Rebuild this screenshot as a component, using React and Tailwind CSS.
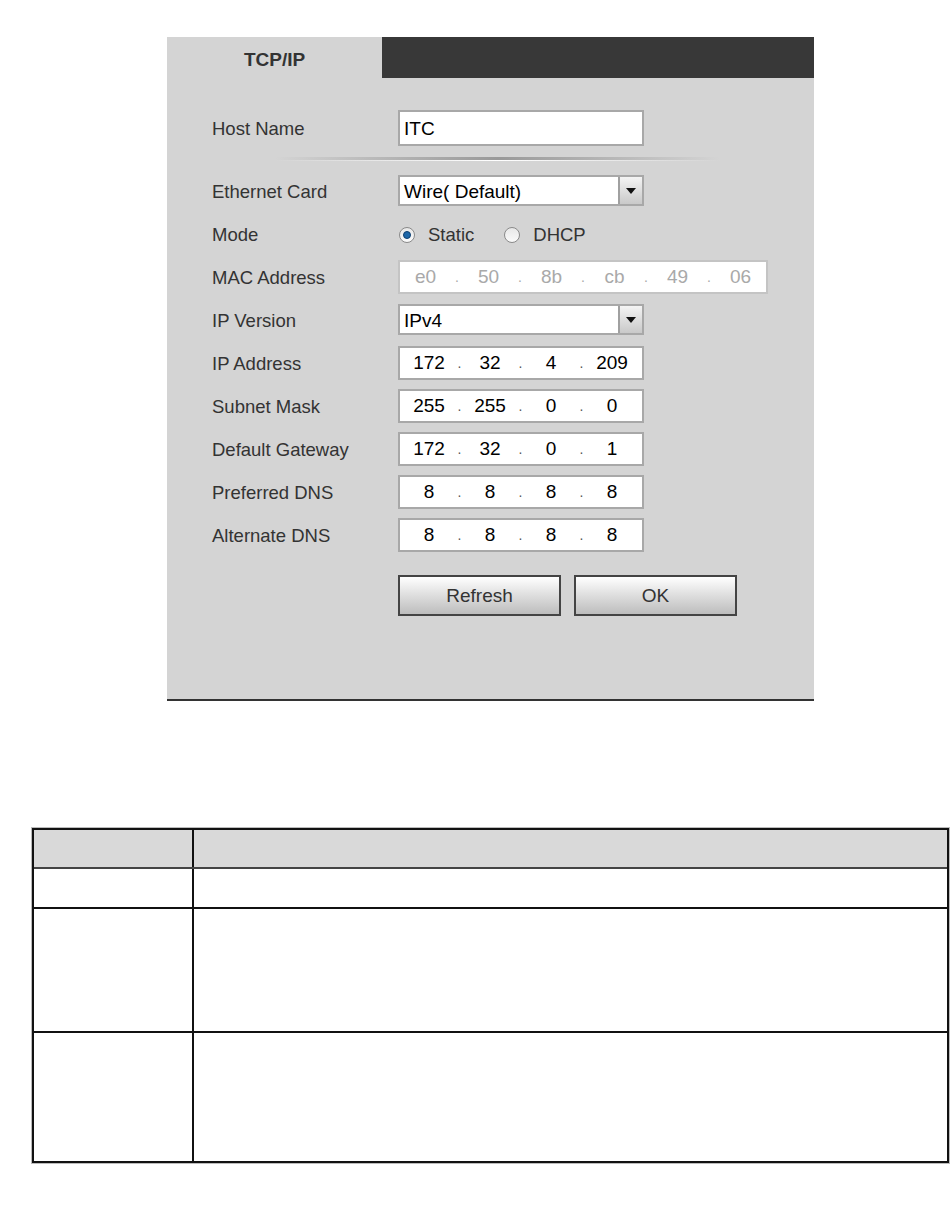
import React from "react";

const font = { fontFamily: '"Liberation Sans", Arial, sans-serif' };

const Dot = ({ gray, w = "w-[9px]" }) => (
  <span className={`${w} text-center text-[14px] ${gray ? "text-[#aaa]" : "text-[#555]"} self-end pb-[4px]`}>.</span>
);

const IpBox = ({ parts }) => (
  <div className="w-[246px] h-[34px] border-2 border-[#a8a8a8] bg-white flex items-center pl-[3px] pt-[2px] text-[19px] text-black">
    {parts.map((p, i) => (
      <React.Fragment key={i}>
        {i > 0 && <Dot />}
        <span className="w-[52px] text-center">{p}</span>
      </React.Fragment>
    ))}
  </div>
);

const MacBox = ({ parts }) => (
  <div className="w-[370px] h-[34px] border-2 border-[#c4c4c4] bg-white flex items-center pt-[2px] text-[19px] text-[#a9a9a9]">
    {parts.map((p, i) => (
      <React.Fragment key={i}>
        {i > 0 && <Dot gray w="w-[12px]" />}
        <span className="flex-1 text-center">{p}</span>
      </React.Fragment>
    ))}
  </div>
);

const Select = ({ value }) => (
  <div className="w-[246px] h-[31px] border-2 border-[#a8a8a8] bg-white flex items-stretch">
    <span className="flex-1 pl-[4px] text-[19px] text-black leading-[29px]">{value}</span>
    <span className="w-[24px] border-l-2 border-[#a0a0a0] bg-gradient-to-b from-[#f4f4f4] to-[#c9c9c9] flex items-center justify-center">
      <svg width="10" height="6" viewBox="0 0 10 6">
        <path d="M0 0H10L5 6Z" fill="#111" />
      </svg>
    </span>
  </div>
);

const Radio = ({ checked }) => (
  <span className="w-[16px] h-[16px] rounded-full border border-[#8a8a8a] bg-gradient-to-b from-[#e8e8e8] to-[#fafafa] flex items-center justify-center">
    {checked && <span className="w-[8px] h-[8px] rounded-full bg-[#1e67a8] border border-[#0d3f70]" />}
  </span>
);

const Row = ({ label, children }) => (
  <div className="h-[43px] flex items-center">
    <span className="w-[186px] text-[18.5px] text-[#333] pt-[2px]">{label}</span>
    {children}
  </div>
);

const Button = ({ children }) => (
  <button className="w-[163px] h-[41px] border-2 border-[#444] bg-gradient-to-b from-white to-[#bdbdbd] text-[19px] text-[#333] pt-[2px]">
    {children}
  </button>
);

export default function App() {
  return (
    <div className="w-[950px] h-[1220px] bg-white relative" style={font}>
      <div className="pt-[37px] pl-[167px]">
        <div className="w-[647px] h-[664px] bg-[#d4d4d4] border-b-2 border-[#333] flex flex-col">
          <div className="h-[41px] flex">
            <div className="w-[215px] flex items-center justify-center font-bold text-[19px] text-[#333] pt-[6px]">TCP/IP</div>
            <div className="flex-1 bg-[#383838]" />
          </div>
          <div className="pl-[45px] pt-[28px]">
            <Row label="Host Name">
              <div className="w-[246px] h-[36px] border-2 border-[#a8a8a8] bg-white pl-[4px] pt-[1px] text-[19px] text-black leading-[32px]">ITC</div>
            </Row>
            <div className="h-[20px] flex flex-col justify-center -ml-[45px] pl-[108px] pr-[94px]">
              <div className="h-[3px] bg-gradient-to-r from-[#d4d4d4] via-[#999] to-[#d4d4d4]" />
              <div className="h-[1px] bg-gradient-to-r from-[#d4d4d4] via-white to-[#d4d4d4]" />
            </div>
            <Row label="Ethernet Card">
              <Select value="Wire( Default)" />
            </Row>
            <Row label="Mode">
              <div className="flex items-center text-[18.5px] text-[#333] pt-[2px]">
                <span className="ml-[1px]"><Radio checked /></span>
                <span className="ml-[13px]">Static</span>
                <span className="ml-[30px]"><Radio /></span>
                <span className="ml-[13px]">DHCP</span>
              </div>
            </Row>
            <Row label="MAC Address">
              <MacBox parts={["e0", "50", "8b", "cb", "49", "06"]} />
            </Row>
            <Row label="IP Version">
              <Select value="IPv4" />
            </Row>
            <Row label="IP Address">
              <IpBox parts={["172", "32", "4", "209"]} />
            </Row>
            <Row label="Subnet Mask">
              <IpBox parts={["255", "255", "0", "0"]} />
            </Row>
            <Row label="Default Gateway">
              <IpBox parts={["172", "32", "0", "1"]} />
            </Row>
            <Row label="Preferred DNS">
              <IpBox parts={["8", "8", "8", "8"]} />
            </Row>
            <Row label="Alternate DNS">
              <IpBox parts={["8", "8", "8", "8"]} />
            </Row>
            <div className="flex gap-[13px] ml-[186px] mt-[19px]">
              <Button>Refresh</Button>
              <Button>OK</Button>
            </div>
          </div>
        </div>
      </div>

      <div className="pt-[127px] pl-[32px]">
        <div className="w-[917px] border-2 border-[#111] outline outline-1 outline-[#bbb]">
          <div className="h-[39px] flex bg-[#d9d9d9] border-b-2 border-[#444]">
            <div className="w-[160px] border-r-2 border-[#111]" />
            <div className="flex-1" />
          </div>
          <div className="h-[40px] flex border-b-2 border-[#111]">
            <div className="w-[160px] border-r-2 border-[#111]" />
            <div className="flex-1" />
          </div>
          <div className="h-[124px] flex border-b-2 border-[#111]">
            <div className="w-[160px] border-r-2 border-[#111]" />
            <div className="flex-1" />
          </div>
          <div className="h-[128px] flex">
            <div className="w-[160px] border-r-2 border-[#111]" />
            <div className="flex-1" />
          </div>
        </div>
      </div>
    </div>
  );
}
